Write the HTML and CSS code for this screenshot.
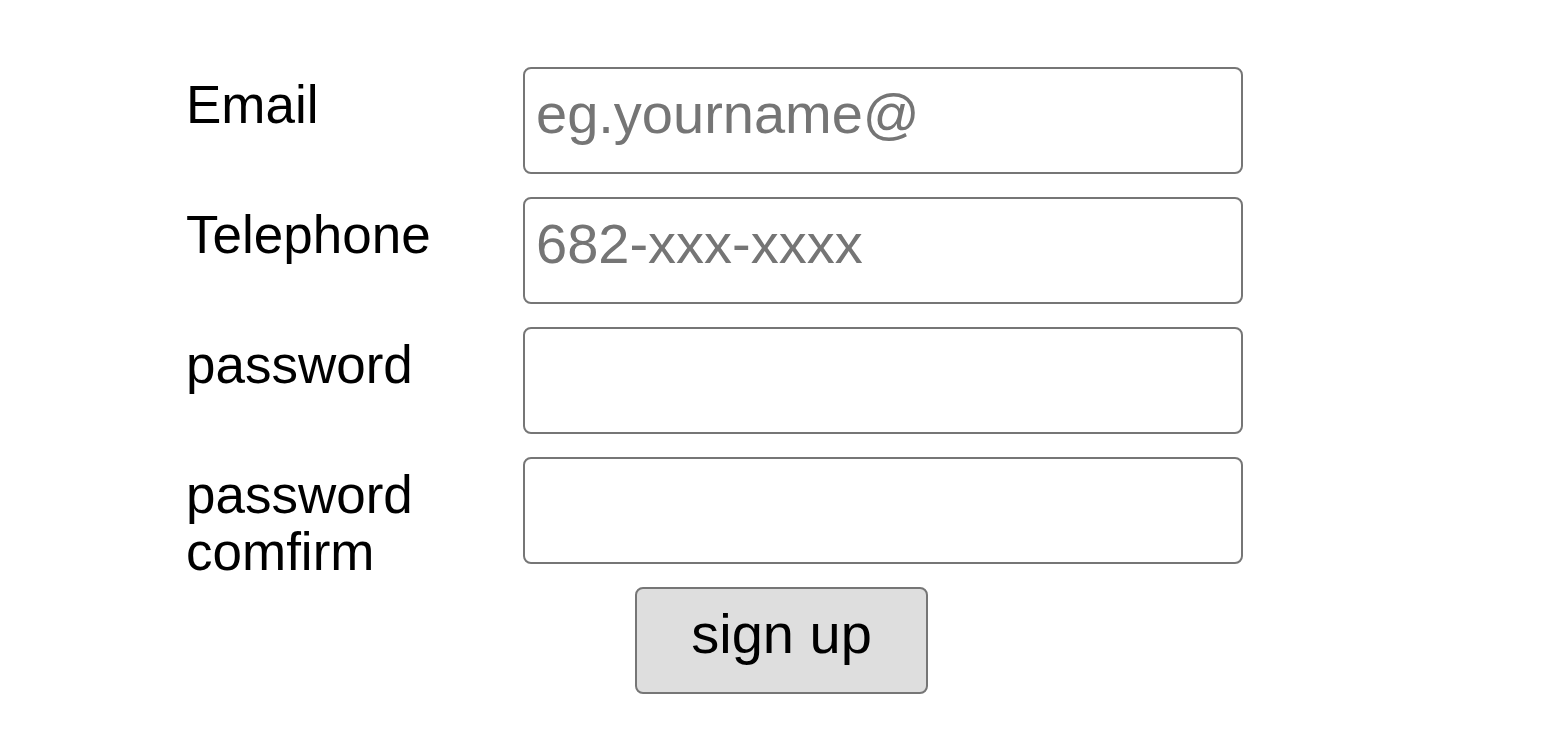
FILE: index.html
```
<!DOCTYPE html>
<html lang="en">
<head>
<meta charset="utf-8">
<title>Sign up</title>
<link rel="stylesheet" href="styles.css">
</head>
<body>
<form class="signup">
  <label class="label" for="email">Email</label>
  <input class="field" id="email" type="email" placeholder="eg.yourname@">
  <label class="label" for="tel">Telephone</label>
  <input class="field" id="tel" type="tel" placeholder="682-xxx-xxxx">
  <label class="label" for="pw">password</label>
  <input class="field" id="pw" type="password">
  <label class="label" for="pw2">password<br>comfirm</label>
  <input class="field" id="pw2" type="password">
  <div class="actions">
    <button class="btn" type="button">sign up</button>
  </div>
</form>
</body>
</html>
```
FILE: styles.css
```
html, body {
  margin: 0;
  padding: 0;
  background: #ffffff;
}
body {
  font-family: "Liberation Sans", Arial, sans-serif;
  color: #000000;
}
.signup {
  display: grid;
  grid-template-columns: 337px 720px;
  grid-auto-rows: 107px;
  row-gap: 23px;
  padding: 67px 0 0 186px;
}
.label {
  font-size: 53px;
  line-height: 57px;
  padding-top: 9px;
  white-space: nowrap;
}
.field {
  box-sizing: border-box;
  width: 720px;
  height: 107px;
  border: 2px solid #767676;
  border-radius: 8px;
  padding: 0 12px 14px 11px;
  font-family: "Liberation Sans", Arial, sans-serif;
  font-size: 56px;
  color: #000;
  background: #fff;
  margin: 0;
}
.field::placeholder {
  color: #757575;
}
.actions {
  grid-column: 2;
  padding-left: 112px;
}
.btn {
  box-sizing: border-box;
  width: 293px;
  height: 107px;
  border: 2px solid #767676;
  border-radius: 8px;
  background: #dedede;
  font-family: "Liberation Sans", Arial, sans-serif;
  font-size: 56px;
  color: #000;
  padding: 0 0 14px 0;
  margin: 0;
}
```
